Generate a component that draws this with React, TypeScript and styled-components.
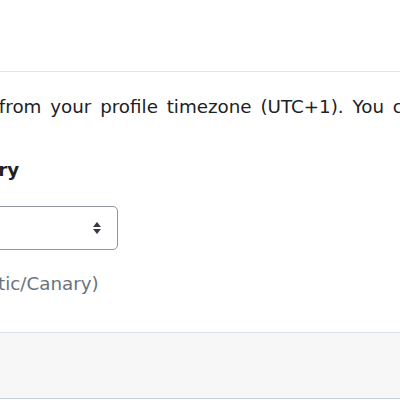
import React from "react";
import styled, { createGlobalStyle } from "styled-components";

const GlobalStyle = createGlobalStyle`
  html, body {
    margin: 0;
    padding: 0;
    background: #ffffff;
    overflow: hidden;
  }
  body {
    font-family: "DejaVu Sans", "Liberation Sans", sans-serif;
    font-size: 18.3px;
    line-height: 1.5;
    word-spacing: 3px;
    color: #1d2125;
  }
  * { box-sizing: border-box; }
`;

const Modal = styled.div`
  width: 900px;
  margin-left: -160px;
  background: #ffffff;
  border-bottom: 1px solid #c6d0d8;
`;

const Header = styled.div`
  height: 72px;
  padding: 0 20px;
  display: flex;
  align-items: center;
  border-bottom: 1px solid #dde5ec;
`;

const Title = styled.h5`
  margin: 0;
  font-size: 20px;
  font-weight: 700;
  line-height: 1.2;
`;

const Body = styled.div`
  padding: 21px 20px 34.6px;
`;

const Paragraph = styled.p`
  margin: 0 0 36px;
  white-space: nowrap;
`;

const InfoIcon = styled.svg`
  display: inline-block;
  width: 16px;
  height: 16px;
  margin-right: 2px;
  vertical-align: -2px;
`;

const Label = styled.label`
  display: block;
  font-weight: 700;
  margin-bottom: 22px;
`;

const SelectWrap = styled.div`
  position: relative;
  width: 258px;
  margin-bottom: 20px;
`;

const Select = styled.select`
  display: block;
  width: 100%;
  height: 44px;
  padding: 0 44px 0 14px;
  appearance: none;
  -webkit-appearance: none;
  background: #ffffff;
  border: 1px solid #8f959e;
  border-radius: 5px;
  font: inherit;
  color: #1d2125;
`;

const Arrows = styled.svg`
  position: absolute;
  right: 17px;
  top: 50%;
  transform: translateY(-50%);
  pointer-events: none;
`;

const Help = styled.div`
  color: #6a737b;
`;

const Footer = styled.div`
  height: 66px;
  background: #f7f7f7;
  border-top: 1px solid #dbe3ea;
`;

export default function App() {
  return (
    <>
      <GlobalStyle />
      <Modal>
        <Header>
          <Title>Timezone</Title>
        </Header>
        <Body>
          <Paragraph>
            <InfoIcon viewBox="0 0 16 16" aria-hidden="true">
              <circle cx="8" cy="8" r="7" fill="none" stroke="#0f6cbf" strokeWidth="1.5" />
              <rect x="7.2" y="7" width="1.6" height="5" fill="#0f6cbf" />
              <rect x="7.2" y="4" width="1.6" height="1.6" fill="#0f6cbf" />
            </InfoIcon>
            It is distinct from your profile timezone (UTC+1). You can change
            which timezone is used below.
          </Paragraph>
          <Label htmlFor="tz">Atlantic/Canary</Label>
          <SelectWrap>
            <Select id="tz" defaultValue="event">
              <option value="event">Event</option>
              <option value="profile">Profile</option>
            </Select>
            <Arrows width="8" height="13" viewBox="0 0 8 13" aria-hidden="true">
              <path d="M0 5.5 L4 0.5 L8 5.5 Z" fill="#343a40" />
              <path d="M0 7.5 L4 12.5 L8 7.5 Z" fill="#343a40" />
            </Arrows>
          </SelectWrap>
          <Help>Current: (Atlantic/Canary)</Help>
        </Body>
        <Footer />
      </Modal>
    </>
  );
}
